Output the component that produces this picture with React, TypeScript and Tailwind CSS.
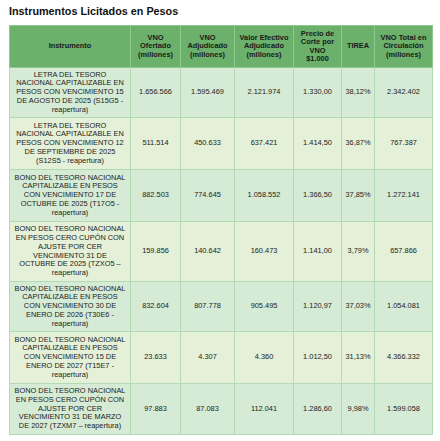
import React from "react";

const rows: { name: string[]; v: string[]; h: number }[] = [
  {
    name: ["LETRA DEL TESORO", "NACIONAL CAPITALIZABLE EN", "PESOS CON VENCIMIENTO 15", "DE AGOSTO DE 2025 (S15G5 -", "reapertura)"],
    v: ["1.656.566", "1.595.469", "2.121.974", "1.330,00", "38,12%", "2.342.402"],
    h: 50,
  },
  {
    name: ["LETRA DEL TESORO", "NACIONAL CAPITALIZABLE EN", "PESOS CON VENCIMIENTO 12", "DE SEPTIEMBRE DE 2025", "(S12S5 - reapertura)"],
    v: ["511.514", "450.633", "637.421", "1.414,50", "36,87%", "767.387"],
    h: 52,
  },
  {
    name: ["BONO DEL TESORO NACIONAL", "CAPITALIZABLE EN PESOS", "CON VENCIMIENTO 17 DE", "OCTUBRE DE 2025 (T17O5 -", "reapertura)"],
    v: ["882.503", "774.645", "1.058.552", "1.366,50", "37,85%", "1.272.141"],
    h: 52,
  },
  {
    name: ["BONO DEL TESORO NACIONAL", "EN PESOS CERO CUPÓN CON", "AJUSTE POR CER", "VENCIMIENTO 31 DE", "OCTUBRE DE 2025 (TZXO5 –", "reapertura)"],
    v: ["159.856", "140.642", "160.473", "1.141,00", "3,79%", "657.866"],
    h: 60,
  },
  {
    name: ["BONO DEL TESORO NACIONAL", "CAPITALIZABLE EN PESOS", "CON VENCIMIENTO 30 DE", "ENERO DE 2026 (T30E6 -", "reapertura)"],
    v: ["832.604", "807.778", "905.495", "1.120,97", "37,03%", "1.054.081"],
    h: 50,
  },
  {
    name: ["BONO DEL TESORO NACIONAL", "CAPITALIZABLE EN PESOS", "CON VENCIMIENTO 15 DE", "ENERO DE 2027 (T15E7 -", "reapertura)"],
    v: ["23.633", "4.307", "4.360", "1.012,50", "31,13%", "4.366.332"],
    h: 52,
  },
  {
    name: ["BONO DEL TESORO NACIONAL", "EN PESOS CERO CUPÓN CON", "AJUSTE POR CER", "VENCIMIENTO 31 DE MARZO", "DE 2027 (TZXM7 – reapertura)"],
    v: ["97.883", "87.083", "112.041", "1.286,60", "9,98%", "1.599.058"],
    h: 51,
  },
];

const widths = [121, 50, 54, 59, 48, 33, 58];

const headers: string[][] = [
  ["Instrumento"],
  ["VNO", "Ofertado", "(millones)"],
  ["VNO", "Adjudicado", "(millones)"],
  ["Valor Efectivo", "Adjudicado", "(millones)"],
  ["Precio de", "Corte por", "VNO", "$1.000"],
  ["TIREA"],
  ["VNO Total en", "Circulación", "(millones)"],
];

export default function App() {
  return (
    <div
      className="w-[440px] h-[441px] bg-white text-[#222]"
      style={{ fontFamily: '"Liberation Sans", Arial, sans-serif' }}
    >
      <div className="pl-[9px] pt-[5px] h-[25px] text-[10.8px] leading-[13px] font-bold text-[#111]">
        Instrumentos Licitados en Pesos
      </div>
      <table className="ml-[9px] border-collapse table-fixed w-[423px] text-[7.4px] leading-[8.7px]">
        <colgroup>
          {widths.map((w, i) => (
            <col key={i} style={{ width: w }} />
          ))}
        </colgroup>
        <thead>
          <tr className="h-[42px] bg-[#6bb06b]">
            {headers.map((h, i) => (
              <th
                key={i}
                className="border border-[#8fc98f] font-bold text-center align-middle p-0 text-[#1a1a1a] leading-[8.2px]"
              >
                {h.map((l, j) => (
                  <div key={j}>{l}</div>
                ))}
              </th>
            ))}
          </tr>
        </thead>
        <tbody>
          {rows.map((r, i) => (
            <tr
              key={i}
              className={i % 2 === 0 ? "bg-[#d6ebd5]" : "bg-[#e4f0d7]"}
              style={{ height: r.h }}
            >
              <td className="border border-[#b3dbb3] text-center align-middle p-0">
                {r.name.map((l, j) => (
                  <div key={j} className="whitespace-nowrap">{l}</div>
                ))}
              </td>
              {r.v.map((v, j) => (
                <td key={j} className="border border-[#b3dbb3] text-center align-middle p-0">
                  {v}
                </td>
              ))}
            </tr>
          ))}
        </tbody>
      </table>
    </div>
  );
}
